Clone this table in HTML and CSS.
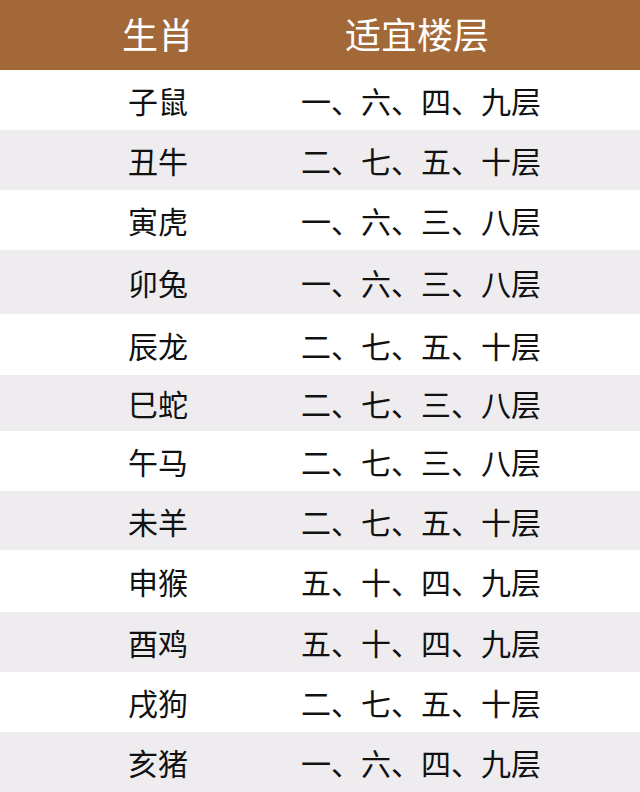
FILE: index.html
```html
<!DOCTYPE html>
<html lang="zh-CN">
<head>
<meta charset="utf-8">
<link rel="stylesheet" href="styles.css">
</head>
<body>
<div class="table">
  <div class="row head"><div class="c1">生肖</div><div class="c2">适宜楼层</div></div>
  <div class="row"><div class="c1">子鼠</div><div class="c2">一、六、四、九层</div></div>
  <div class="row alt"><div class="c1">丑牛</div><div class="c2">二、七、五、十层</div></div>
  <div class="row"><div class="c1">寅虎</div><div class="c2">一、六、三、八层</div></div>
  <div class="row alt tall"><div class="c1">卯兔</div><div class="c2">一、六、三、八层</div></div>
  <div class="row r61"><div class="c1">辰龙</div><div class="c2">二、七、五、十层</div></div>
  <div class="row alt short"><div class="c1">巳蛇</div><div class="c2">二、七、三、八层</div></div>
  <div class="row"><div class="c1">午马</div><div class="c2">二、七、三、八层</div></div>
  <div class="row alt r59"><div class="c1">未羊</div><div class="c2">二、七、五、十层</div></div>
  <div class="row r62"><div class="c1">申猴</div><div class="c2">五、十、四、九层</div></div>
  <div class="row alt"><div class="c1">酉鸡</div><div class="c2">五、十、四、九层</div></div>
  <div class="row"><div class="c1">戌狗</div><div class="c2">二、七、五、十层</div></div>
  <div class="row alt"><div class="c1">亥猪</div><div class="c2">一、六、四、九层</div></div>
</div>
</body>
</html>
```
FILE: styles.css
```css
html, body {
  margin: 0;
  padding: 0;
  background: #ffffff;
}
body {
  width: 640px;
  height: 792px;
  overflow: hidden;
  font-family: "Noto Sans CJK SC", "Noto Sans", sans-serif;
}
.table {
  display: flex;
  flex-direction: column;
}
.row {
  display: grid;
  grid-template-columns: 286px 240px;
  padding-left: 15px;
  height: 60px;
  align-items: center;
  background: #ffffff;
  color: #111111;
  font-size: 30px;
  line-height: 1;
}
.row > div {
  text-align: center;
  white-space: nowrap;
}
.alt {
  background: #eeecef;
}
.head {
  height: 70px;
  background: #a36837;
  color: #ffffff;
  font-size: 36px;
  padding-bottom: 4px;
  box-sizing: border-box;
}
.head .c2 {
  padding-right: 8px;
}
.tall { height: 64px; }
.r61 { height: 61px; }
.short { height: 56px; }
.r59 { height: 59px; }
.r62 { height: 62px; }
```
